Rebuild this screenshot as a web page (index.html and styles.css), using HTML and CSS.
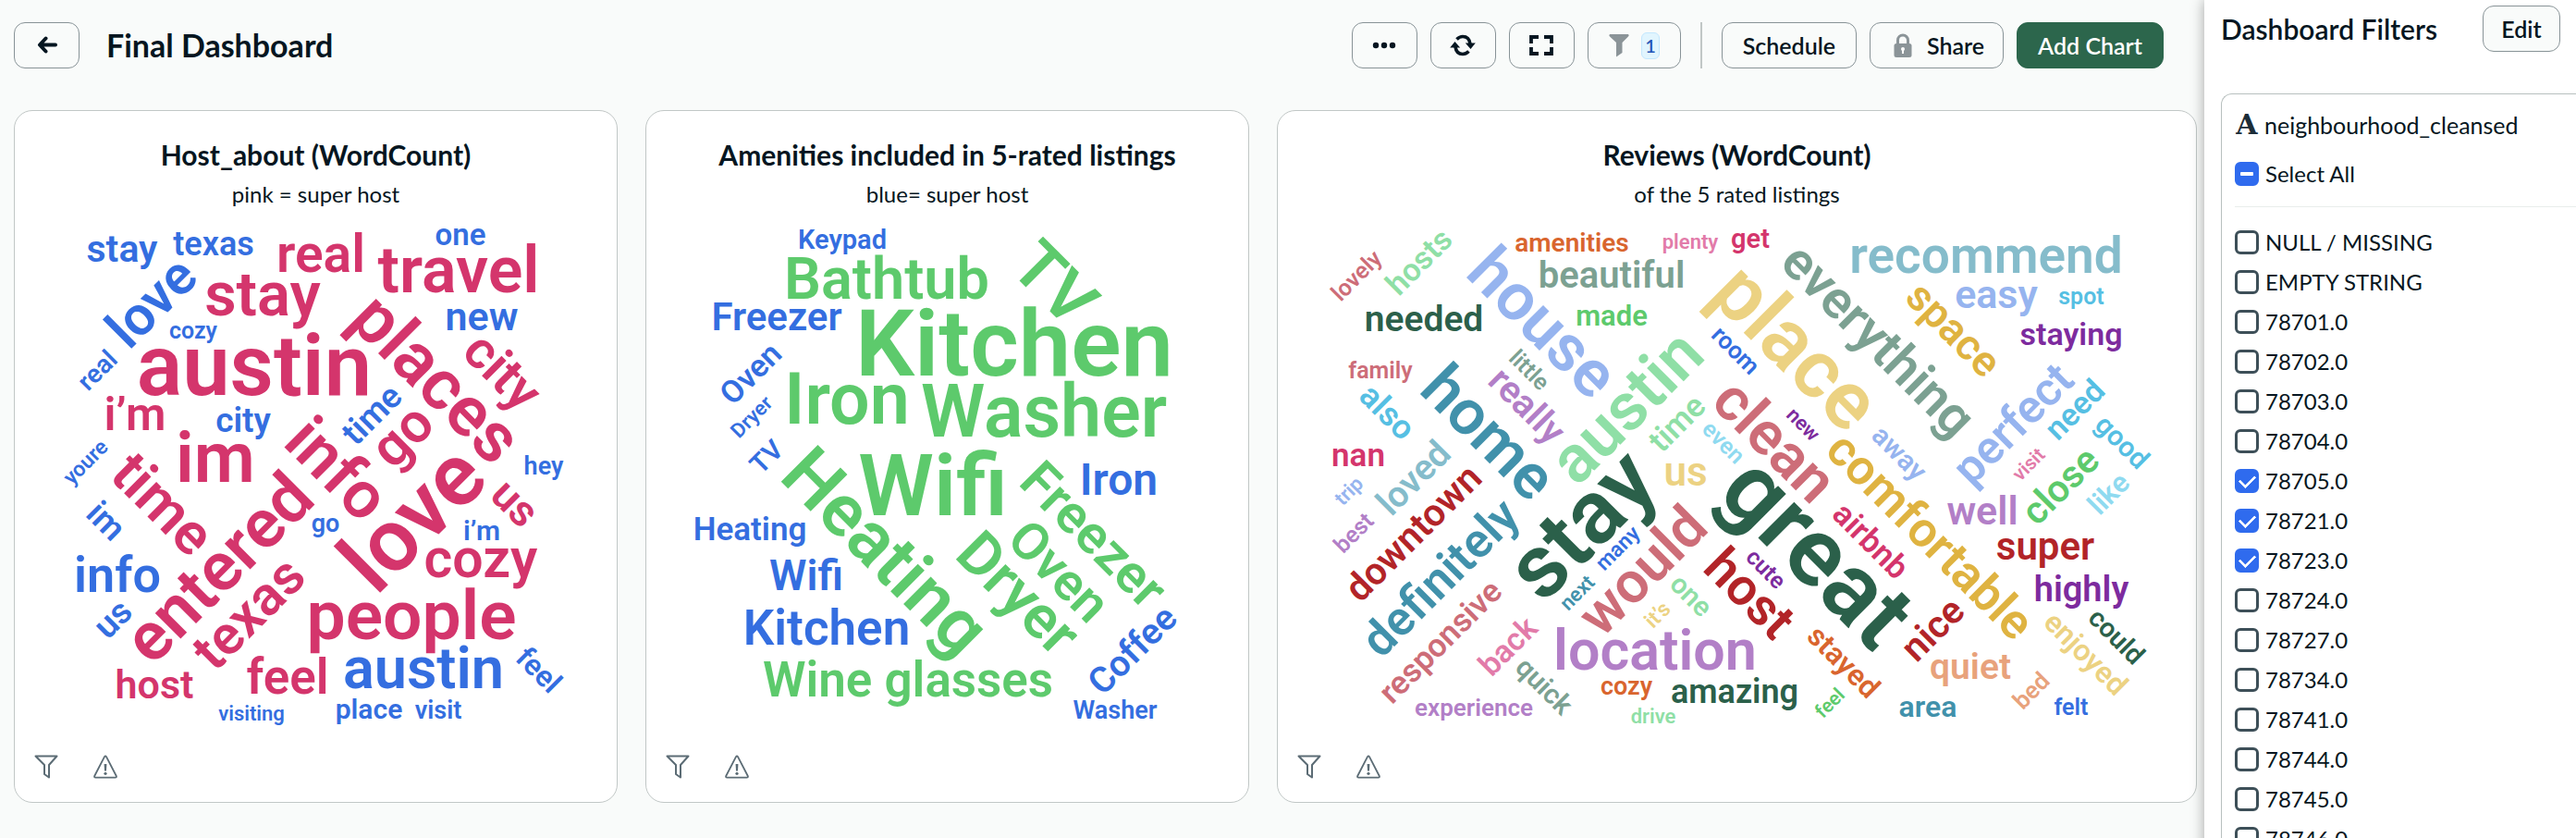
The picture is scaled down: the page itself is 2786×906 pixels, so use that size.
FILE: index.html
```html
<!DOCTYPE html>
<html lang="en">
<head>
<meta charset="utf-8">
<meta name="viewport" content="width=device-width, initial-scale=1">
<title>Final Dashboard</title>
<link rel="stylesheet" href="styles.css">
</head>
<body class="page">
<svg class="sprite" aria-hidden="true">
  <symbol id="i-funnel" viewBox="0 0 26 26"><path d="M1.500 1.500h23l-8.500 9.500v13.500l-5-3.500v-10z" fill="none" stroke="currentColor" stroke-width="2" stroke-linejoin="round"/></symbol>
  <symbol id="i-warn" viewBox="0 0 26 26"><path d="M12 2.200q1-1.600 2 0L24.800 23q.5 1.600-1.200 1.600H2.400Q.700 24.600 1.200 23z" fill="none" stroke="currentColor" stroke-width="1.800" stroke-linejoin="round"/><path d="M11.600 10h2.800l-.4 7.500h-2z" fill="currentColor"/><circle cx="13" cy="20.300" r="1.600" fill="currentColor"/></symbol>
</svg>

<main class="main">
  <header class="toolbar">
    <button class="btn btn-icon" aria-label="Back">
      <svg width="22" height="20" viewBox="0 0 22 20"><path d="M20 9.500H4M9.500 2.500L3 9.500l6.500 7" fill="none" stroke="currentColor" stroke-width="4" stroke-linecap="round" stroke-linejoin="round"/></svg>
    </button>
    <h1 class="title">Final Dashboard</h1>
    <div class="actions">
      <button class="btn btn-icon" aria-label="More">
        <svg width="26" height="8" viewBox="0 0 26 8"><circle cx="4" cy="4" r="3.200" fill="currentColor"/><circle cx="13" cy="4" r="3.200" fill="currentColor"/><circle cx="22" cy="4" r="3.200" fill="currentColor"/></svg>
      </button>
      <button class="btn btn-icon" aria-label="Refresh">
        <svg width="28" height="24" viewBox="0 0 28 24"><g fill="none" stroke="currentColor" stroke-width="3.600"><path d="M7.500 5.500Q10.500 2.500 14 2.500q7 0 8 8"/><path d="M20.500 18.500q-3 3-6.500 3-7 0-8-8"/></g><path d="M16.800 9.500h11L22.500 16zM.200 14.500h11L5.500 8z" fill="currentColor"/></svg>
      </button>
      <button class="btn btn-icon" aria-label="Full screen">
        <svg width="28" height="24" viewBox="0 0 28 24"><path d="M11 3H3v7M17 3h8v7M11 21H3v-7M17 21h8v-7" fill="none" stroke="currentColor" stroke-width="3.800"/></svg>
      </button>
      <button class="btn btn-filter" aria-label="Filters, 1 applied">
        <svg class="muted" width="24" height="26" viewBox="0 0 24 26"><path d="M2 1h20q1.500 1 0 2.500L15.500 10v11L9 25.500V10L2 3.500Q.500 2 2 1z" fill="currentColor"/></svg>
        <span class="badge">1</span>
      </button>
      <span class="divider"></span>
      <button class="btn">Schedule</button>
      <button class="btn btn-share">
        <svg class="muted" width="20" height="26" viewBox="0 0 20 26"><path d="M4.500 12V7.500a5.500 5.500 0 0 1 11 0V12" fill="none" stroke="currentColor" stroke-width="3"/><rect x=".5" y="11" width="19" height="15" rx="2.500" fill="currentColor"/><circle cx="10" cy="17" r="2" fill="#fff"/><path d="M9 17h2v5H9z" fill="#fff"/></svg>
        Share
      </button>
      <button class="btn btn-primary">Add Chart</button>
    </div>
  </header>

  <section class="cards">
    <article class="card">
      <h2 class="card-title">Host_about (WordCount)</h2>
      <p class="card-sub">pink = super host</p>
      <svg class="cloud" viewBox="16 240 651 560" role="img" aria-label="Host_about word cloud">
        <g class="pink">
          <text x="347" y="294" font-size="57">real</text>
          <text x="496" y="316" font-size="70">travel</text>
          <text x="284" y="341" font-size="67">stay</text>
          <text x="275" y="427" font-size="92">austin</text>
          <text x="146" y="465" font-size="50">i’m</text>
          <text x="233" y="521" font-size="76">im</text>
          <text x="520" y="624" font-size="59">cozy</text>
          <text x="445" y="691" font-size="75">people</text>
          <text x="167" y="755" font-size="43">host</text>
          <text x="311" y="750" font-size="53">feel</text>
          <text transform="translate(454 427) rotate(45)" font-size="76">places</text>
          <text transform="translate(530 415) rotate(45)" font-size="57">city</text>
          <text transform="translate(348 524) rotate(45)" font-size="71">info</text>
          <text transform="translate(161 560) rotate(45)" font-size="63">time</text>
          <text transform="translate(546 555) rotate(45)" font-size="47">us</text>
          <text transform="translate(449 485) rotate(-45)" font-size="60">go</text>
          <text transform="translate(254 632) rotate(-45)" font-size="74">entered</text>
          <text transform="translate(469 583) rotate(-45)" font-size="95">love</text>
          <text transform="translate(283 677) rotate(-45)" font-size="59">texas</text>
        </g>
        <g class="blue">
          <text x="132" y="283" font-size="41">stay</text>
          <text x="231" y="276" font-size="36">texas</text>
          <text x="498" y="265" font-size="33">one</text>
          <text x="521" y="357" font-size="43">new</text>
          <text x="209" y="366" font-size="25">cozy</text>
          <text x="263" y="467" font-size="37">city</text>
          <text x="588" y="513" font-size="27">hey</text>
          <text x="352" y="575" font-size="27">go</text>
          <text x="521" y="584" font-size="30">i’m</text>
          <text x="127" y="640" font-size="54">info</text>
          <text x="458" y="744" font-size="63">austin</text>
          <text x="272" y="779" font-size="22">visiting</text>
          <text x="399" y="777" font-size="30">place</text>
          <text x="474" y="777" font-size="27">visit</text>
          <text transform="translate(178 341) rotate(-45)" font-size="59">love</text>
          <text transform="translate(112 407) rotate(-45)" font-size="28">real</text>
          <text transform="translate(411 457) rotate(-45)" font-size="37">time</text>
          <text transform="translate(98 505) rotate(-45)" font-size="23">youre</text>
          <text transform="translate(131 678) rotate(-45)" font-size="38">us</text>
          <text transform="translate(106 572) rotate(45)" font-size="37">im</text>
          <text transform="translate(575 732) rotate(45)" font-size="32">feel</text>
        </g>
      </svg>
      <footer class="card-foot"><svg class="foot-icon"><use href="#i-funnel"/></svg><svg class="foot-icon"><use href="#i-warn"/></svg></footer>
    </article>

    <article class="card">
      <h2 class="card-title">Amenities included in 5-rated listings</h2>
      <p class="card-sub">blue= super host</p>
      <svg class="cloud" viewBox="700 240 651 560" role="img" aria-label="Amenities word cloud">
        <g class="green">
          <text x="960" y="323" font-size="63">Bathtub</text>
          <text x="1098" y="406" font-size="101">Kitchen</text>
          <text x="917" y="458" font-size="77">Iron</text>
          <text x="1130" y="472" font-size="79">Washer</text>
          <text x="1010" y="557" font-size="93">Wifi</text>
          <text x="983" y="753" font-size="53">Wine glasses</text>
          <text transform="translate(1124 324) rotate(45)" font-size="73">TV</text>
          <text transform="translate(940 615) rotate(45)" font-size="79">Heating</text>
          <text transform="translate(1087 657) rotate(45)" font-size="65">Dryer</text>
          <text transform="translate(1133 631) rotate(45)" font-size="56">Oven</text>
          <text transform="translate(1170 592) rotate(45)" font-size="58">Freezer</text>
        </g>
        <g class="blue">
          <text x="912" y="269" font-size="29">Keypad</text>
          <text x="841" y="357" font-size="42">Freezer</text>
          <text x="1211" y="535" font-size="48">Iron</text>
          <text x="812" y="584" font-size="35">Heating</text>
          <text x="873" y="638" font-size="46">Wifi</text>
          <text x="895" y="697" font-size="53">Kitchen</text>
          <text x="1207" y="777" font-size="27">Washer</text>
          <text transform="translate(821 412) rotate(-45)" font-size="34">Oven</text>
          <text transform="translate(819 456) rotate(-45)" font-size="22">Dryer</text>
          <text transform="translate(837 501) rotate(-45)" font-size="29">TV</text>
          <text transform="translate(1235 712) rotate(-45)" font-size="39">Coffee</text>
        </g>
      </svg>
      <footer class="card-foot"><svg class="foot-icon"><use href="#i-funnel"/></svg><svg class="foot-icon"><use href="#i-warn"/></svg></footer>
    </article>

    <article class="card">
      <h2 class="card-title">Reviews (WordCount)</h2>
      <p class="card-sub">of the 5 rated listings</p>
      <svg class="cloud" viewBox="1382 240 993 560" role="img" aria-label="Reviews word cloud">
        <g class="forest">
          <text x="1540" y="358" font-size="39">needed</text>
          <text x="1876" y="760" font-size="36">amazing</text>
          <text transform="translate(1733 590) rotate(-45)" font-size="97">stay</text>
          <text transform="translate(1941 621) rotate(45)" font-size="104">great</text>
          <text transform="translate(2282 695) rotate(45)" font-size="29">could</text>
        </g>
        <g class="orange">
          <text x="1700" y="272" font-size="28">amenities</text>
          <text x="1759" y="751" font-size="27">cozy</text>
          <text transform="translate(1986 723) rotate(45)" font-size="32">stayed</text>
        </g>
        <g class="rose">
          <text x="1828" y="269" font-size="22">plenty</text>
          <text transform="translate(2199 507) rotate(-45)" font-size="21">visit</text>
          <text transform="translate(1639 707) rotate(-45)" font-size="34">back</text>
        </g>
        <g class="pink">
          <text x="1893" y="268" font-size="29">get</text>
          <text x="1469" y="504" font-size="35">nan</text>
          <text transform="translate(2015 593) rotate(45)" font-size="35">airbnb</text>
        </g>
        <g class="teal">
          <text x="2148" y="295" font-size="55">recommend</text>
          <text transform="translate(1538 526) rotate(-45)" font-size="39">loved</text>
        </g>
        <g class="sage">
          <text x="1743" y="311" font-size="40">beautiful</text>
          <text transform="translate(2018 381) rotate(45)" font-size="57">everything</text>
          <text transform="translate(1648 406) rotate(45)" font-size="25">little</text>
          <text transform="translate(1663 749) rotate(45)" font-size="30">quick</text>
        </g>
        <g class="green">
          <text x="1743" y="352" font-size="31">made</text>
          <text transform="translate(2238 535) rotate(-45)" font-size="41">close</text>
          <text transform="translate(1984 765) rotate(-45)" font-size="21">feel</text>
        </g>
        <g class="periwinkle">
          <text x="2159" y="333" font-size="43">easy</text>
          <text transform="translate(1652 366) rotate(45)" font-size="71">house</text>
          <text transform="translate(2047 497) rotate(45)" font-size="30">away</text>
          <text transform="translate(2189 470) rotate(-45)" font-size="50">perfect</text>
          <text transform="translate(1464 536) rotate(-45)" font-size="22">trip</text>
        </g>
        <g class="sky">
          <text x="2251" y="329" font-size="25">spot</text>
          <text transform="translate(1492 454) rotate(45)" font-size="36">also</text>
          <text transform="translate(2252 451) rotate(-45)" font-size="34">need</text>
          <text transform="translate(2288 485) rotate(45)" font-size="30">good</text>
        </g>
        <g class="purple">
          <text x="2240" y="373" font-size="34">staying</text>
          <text x="2251" y="650" font-size="38">highly</text>
          <text transform="translate(1945 464) rotate(45)" font-size="22">new</text>
          <text transform="translate(1904 621) rotate(45)" font-size="25">cute</text>
        </g>
        <g class="coral">
          <text x="1493" y="409" font-size="25">family</text>
          <text transform="translate(1473 304) rotate(-45)" font-size="25">lovely</text>
          <text transform="translate(1904 492) rotate(45)" font-size="65">clean</text>
          <text transform="translate(1791 632) rotate(-45)" font-size="62">would</text>
          <text transform="translate(1566 702) rotate(-45)" font-size="35">responsive</text>
        </g>
        <g class="sand">
          <text x="1823" y="525" font-size="44">us</text>
          <text transform="translate(1922 396) rotate(45)" font-size="88">place</text>
          <text transform="translate(2248 714) rotate(45)" font-size="32">enjoyed</text>
          <text transform="translate(1798 670) rotate(-45)" font-size="23">it’s</text>
        </g>
        <g class="gold">
          <text transform="translate(2102 367) rotate(45)" font-size="46">space</text>
          <text transform="translate(2075 592) rotate(45)" font-size="53">comfortable</text>
        </g>
        <g class="lilac">
          <text x="2144" y="567" font-size="43">well</text>
          <text x="1790" y="724" font-size="61">location</text>
          <text x="1594" y="774" font-size="26">experience</text>
          <text transform="translate(1642 448) rotate(45)" font-size="40">really</text>
          <text transform="translate(1470 582) rotate(-45)" font-size="25">best</text>
        </g>
        <g class="red">
          <text x="2212" y="605" font-size="42">super</text>
          <text transform="translate(1538 586) rotate(-45)" font-size="41">downtown</text>
          <text transform="translate(1879 655) rotate(45)" font-size="56">host</text>
          <text transform="translate(2100 690) rotate(-45)" font-size="41">nice</text>
        </g>
        <g class="mint">
          <text x="1788" y="782" font-size="22">drive</text>
          <text transform="translate(1543 291) rotate(-45)" font-size="34">hosts</text>
          <text transform="translate(1776 457) rotate(-45)" font-size="72">austin</text>
          <text transform="translate(1822 466) rotate(-45)" font-size="35">time</text>
          <text transform="translate(1822 651) rotate(45)" font-size="30">one</text>
        </g>
        <g class="ocean">
          <text x="2085" y="775" font-size="32">area</text>
          <text transform="translate(1594 484) rotate(45)" font-size="68">home</text>
          <text transform="translate(1570 637) rotate(-45)" font-size="52">definitely</text>
          <text transform="translate(1711 646) rotate(-45)" font-size="22">next</text>
        </g>
        <g class="ice">
          <text transform="translate(1858 484) rotate(45)" font-size="25">even</text>
          <text transform="translate(2288 541) rotate(-45)" font-size="31">like</text>
        </g>
        <g class="peach">
          <text x="2131" y="734" font-size="39">quiet</text>
          <text transform="translate(2203 753) rotate(-45)" font-size="26">bed</text>
        </g>
        <g class="blue">
          <text x="2240" y="773" font-size="25">felt</text>
          <text transform="translate(1871 385) rotate(45)" font-size="26">room</text>
          <text transform="translate(1755 598) rotate(-45)" font-size="23">many</text>
        </g>
      </svg>
      <footer class="card-foot"><svg class="foot-icon"><use href="#i-funnel"/></svg><svg class="foot-icon"><use href="#i-warn"/></svg></footer>
    </article>
  </section>
</main>

<aside class="sidebar">
  <header class="side-head">
    <h2 class="side-title">Dashboard Filters</h2>
    <button class="btn btn-edit">Edit</button>
  </header>
  <div class="filter">
    <h3 class="field"><span class="type-icon" aria-hidden="true">A</span>neighbourhood_cleansed</h3>
    <label class="check all"><input class="box partial" type="checkbox" aria-checked="mixed">Select All</label>
    <div class="options">
      <label class="check"><input class="box" type="checkbox">NULL / MISSING</label>
      <label class="check"><input class="box" type="checkbox">EMPTY STRING</label>
      <label class="check"><input class="box" type="checkbox">78701.0</label>
      <label class="check"><input class="box" type="checkbox">78702.0</label>
      <label class="check"><input class="box" type="checkbox">78703.0</label>
      <label class="check"><input class="box" type="checkbox">78704.0</label>
      <label class="check"><input class="box" type="checkbox" checked>78705.0</label>
      <label class="check"><input class="box" type="checkbox" checked>78721.0</label>
      <label class="check"><input class="box" type="checkbox" checked>78723.0</label>
      <label class="check"><input class="box" type="checkbox">78724.0</label>
      <label class="check"><input class="box" type="checkbox">78727.0</label>
      <label class="check"><input class="box" type="checkbox">78734.0</label>
      <label class="check"><input class="box" type="checkbox">78741.0</label>
      <label class="check"><input class="box" type="checkbox">78744.0</label>
      <label class="check"><input class="box" type="checkbox">78745.0</label>
      <label class="check"><input class="box" type="checkbox">78746.0</label>
    </div>
  </div>
</aside>
</body>
</html>
```
FILE: styles.css
```css
* { box-sizing: border-box; }

.page {
  margin: 0;
  height: 100vh;
  overflow: hidden;
  display: grid;
  grid-template-columns: minmax(0, 1fr) 402px;
  background: #f9fbfa;
  color: #061621;
  font-family: Lato, "Open Sans", sans-serif;
  font-size: 24px;
  line-height: 30px;
}

.sprite { position: absolute; width: 0; height: 0; }

.main { padding: 24px 8px 24px 15px; }

/* Toolbar */
.toolbar { display: flex; align-items: center; padding-right: 36px; margin-bottom: 45px; }
.title { margin: 0 0 0 29px; font-size: 34px; line-height: 40px; font-weight: 700; }
.actions { display: flex; align-items: center; gap: 14px; margin-left: auto; }

.btn {
  display: inline-flex;
  align-items: center;
  justify-content: center;
  gap: 16px;
  height: 50px;
  padding: 0 22px;
  border: 1px solid #889397;
  border-radius: 12px;
  background: #f9fbfa;
  color: #061621;
  font-family: inherit;
  font-size: 25px;
  font-weight: 600;
}
.btn-icon { width: 71px; padding: 0; }
.btn-filter { width: 101px; padding: 0; gap: 12px; }
.btn-share { padding: 0 20px 0 25px; }
.btn-primary { background: #2c664c; border-color: #2c664c; color: #fff; }
.muted { color: #8b9498; }

.badge {
  width: 20px;
  height: 29px;
  border: 1px solid #c3e7fe;
  border-radius: 6px;
  background: #e1f5fe;
  color: #2456b8;
  font-size: 20px;
  line-height: 27px;
}
.divider { width: 2px; height: 50px; margin: 0 7px; background: #c1c7c6; }

/* Chart cards */
.cards { display: grid; grid-template-columns: 653fr 653fr 995fr; gap: 30px; }
.card {
  min-width: 0;
  padding: 29px 0 25px;
  border: 1px solid #c1c7c6;
  border-radius: 20px;
  background: #fff;
  text-align: center;
}
.card-title { margin: 0 0 10px; font-size: 30px; line-height: 36px; font-weight: 700; }
.card-sub { margin: 0 0 15px; }
.cloud {
  display: block;
  width: 100%;
  height: auto;
  margin-bottom: 16px;
  font-family: Roboto, "Liberation Sans", sans-serif;
  font-weight: 600;
  text-anchor: middle;
}
.card-foot { display: flex; gap: 38px; padding-left: 21px; color: #5c6c75; }
.foot-icon { width: 26px; height: 26px; }

.pink { fill: #d4356c; }
.blue { fill: #346ee0; }
.green { fill: #5dca6c; }
.forest { fill: #2b604a; }
.orange { fill: #d9652e; }
.rose { fill: #e27ba9; }
.teal { fill: #85bccb; }
.sage { fill: #7ca192; }
.periwinkle { fill: #96b4ef; }
.sky { fill: #56bfe3; }
.purple { fill: #7d2b9e; }
.coral { fill: #cd6d78; }
.sand { fill: #ecd282; }
.gold { fill: #dfb341; }
.lilac { fill: #b27fc7; }
.red { fill: #b22428; }
.mint { fill: #8fdfa6; }
.ocean { fill: #4191ab; }
.ice { fill: #8fdaf0; }
.peach { fill: #e8a27c; }

/* Filter sidebar */
.sidebar {
  position: relative;
  padding: 6px 0 0 18px;
  background: #fff;
  box-shadow: 0 0 14px rgba(0, 0, 0, 0.35);
}
.side-head { display: flex; align-items: center; justify-content: space-between; padding-right: 17px; margin-bottom: 45px; }
.side-title { margin: 0; font-size: 30px; line-height: 36px; font-weight: 600; }
.btn-edit { width: 84px; padding: 0; }

.filter { border: 1px solid #b8c0bf; border-right: 0; border-radius: 12px 0 0 0; padding: 18px 0 0 14px; }
.field { display: flex; align-items: center; gap: 6px; margin: 0 0 25px; font-size: 25px; font-weight: 400; }
.type-icon { width: 26px; text-align: center; font: 700 30px/30px "DejaVu Serif", serif; color: #1c2d38; }
.check { display: flex; align-items: center; gap: 7px; height: 26px; }
.all { margin-bottom: 22px; }
.options { display: grid; gap: 17px; padding-top: 25px; border-top: 1px solid #e8edeb; }

.box {
  appearance: none;
  display: grid;
  place-items: center;
  flex: none;
  width: 26px;
  height: 26px;
  margin: 0;
  border: 3px solid #3d4f58;
  border-radius: 6px;
  background: #fff;
}
.box:checked, .box.partial { border-color: #2f6bee; background: #2f6bee; }
.box:checked::after {
  content: "";
  width: 8px;
  height: 14px;
  margin-bottom: 4px;
  border: solid #fff;
  border-width: 0 3px 3px 0;
  border-radius: 1px;
  transform: rotate(45deg);
}
.box.partial::after { content: ""; width: 14px; height: 4px; border-radius: 1px; background: #fff; }
```
